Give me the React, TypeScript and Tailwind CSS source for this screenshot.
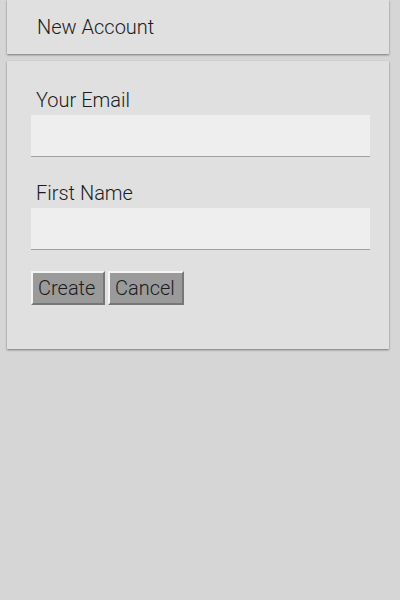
const Field = ({ label }: { label: string }) => (
  <div className="flex flex-col">
    <label className="pl-[5px] text-[20px] leading-[24px] font-light text-[#1c1c1c]">{label}</label>
    <input className="mt-[3px] h-[42px] w-[339px] border-0 border-b border-[#a0a0a0] bg-[#eeeeee] px-2 outline-none" />
  </div>
);

const App = () => {
  return (
    <div className="min-h-[600px] bg-[#d6d6d6] font-['Roboto',sans-serif] pt-px">
      <div className="-mt-px ml-[7px] flex h-[54px] w-[382px] items-center bg-[#e0e0e0] pl-[30px] shadow-[0_1px_2px_rgba(0,0,0,0.45)]">
        <span className="text-[20px] font-light text-[#1c1c1c]">New Account</span>
      </div>
      <div className="ml-[7px] mt-[7px] flex w-[382px] flex-col bg-[#e0e0e0] pt-[27px] pb-[44px] pl-[24px] shadow-[0_1px_2px_rgba(0,0,0,0.45)]">
        <Field label="Your Email" />
        <div className="mt-[24px]">
          <Field label="First Name" />
        </div>
        <div className="mt-[21px] flex gap-[3px]">
          <button className="h-[34px] w-[74px] border-2 border-t-[#f4f4f4] border-l-[#f4f4f4] border-b-[#777777] border-r-[#777777] bg-[#9a9a9a] pl-[5px] text-left text-[20px] font-light text-[#1c1c1c]">
            Create
          </button>
          <button className="h-[34px] w-[76px] border-2 border-t-[#f4f4f4] border-l-[#f4f4f4] border-b-[#777777] border-r-[#777777] bg-[#9a9a9a] pl-[5px] text-left text-[20px] font-light text-[#1c1c1c]">
            Cancel
          </button>
        </div>
      </div>
    </div>
  );
};

export default App;
